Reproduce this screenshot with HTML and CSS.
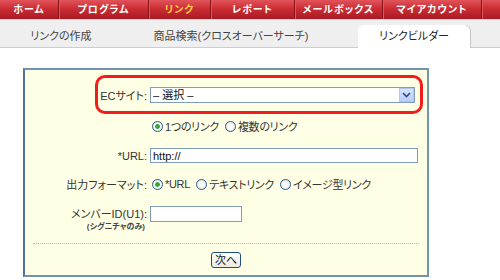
FILE: index.html
```html
<!DOCTYPE html>
<html lang="ja">
<head>
    <meta charset="UTF-8">
    <title>リンクビルダー</title>
    <link rel="stylesheet" href="styles.css">
</head>
<body>
    <nav class="topnav">
        <a class="nav-home" href="#">ホーム</a>
        <a class="nav-program" href="#">プログラム</a>
        <a class="nav-link current" href="#">リンク</a>
        <a class="nav-report" href="#">レポート</a>
        <a class="nav-mail" href="#">メールボックス</a>
        <a class="nav-account" href="#">マイアカウント</a>
    </nav>
    <div class="tabs">
        <div class="tab tab-create">リンクの作成</div>
        <div class="tab tab-search">商品検索(クロスオーバーサーチ)</div>
        <div class="tab tab-active">リンクビルダー</div>
    </div>

    <form class="builder">
        <div class="ec-row">
            <label class="ec-label" for="ecsite">ECサイト:</label>
            <div class="select-wrap">
                <select id="ecsite" class="ec-select">
                    <option>– 選択 –</option>
                </select>
                <span class="select-arrow">
                    <svg width="9" height="6" viewBox="0 0 9 6"><path d="M1 1 L4.5 4.5 L8 1" fill="none" stroke="#2b4a86" stroke-width="1.6"/></svg>
                </span>
            </div>
        </div>

        <div class="field field-count">
            <span></span>
            <div class="options">
                <label class="opt"><input type="radio" name="count" checked>1つのリンク</label>
                <label class="opt"><input type="radio" name="count">複数のリンク</label>
            </div>
        </div>

        <div class="field field-url">
            <label for="url">*URL:</label>
            <input type="text" id="url" class="text-input url-input" value="http://">
        </div>

        <div class="field field-format">
            <span class="field-label">出力フォーマット:</span>
            <div class="options">
                <label class="opt"><input type="radio" name="format" checked>*URL</label>
                <label class="opt"><input type="radio" name="format">テキストリンク</label>
                <label class="opt"><input type="radio" name="format">イメージ型リンク</label>
            </div>
        </div>

        <div class="field field-member">
            <div class="member-label">
                <label for="member">メンバーID(U1):</label>
                <small>(シグニチャのみ)</small>
            </div>
            <input type="text" id="member" class="text-input member-input">
        </div>

        <div class="divider"></div>

        <div class="actions">
            <button type="button" class="next-button">次へ</button>
        </div>
    </form>
</body>
</html>
```

FILE: styles.css
```css
* {
    box-sizing: border-box;
}

body {
    margin: 0;
    background: #fff;
    color: #333;
    font-family: "Liberation Sans", "Noto Sans CJK JP", sans-serif;
    font-size: 11px;
    font-feature-settings: "palt";
}

/* top red menu */
.topnav {
    display: flex;
    height: 19px;
    background: linear-gradient(#e1545a 0%, #cc2d35 45%, #a71b23 100%);
}

.topnav a {
    color: #fff;
    font-weight: bold;
    font-size: 10px;
    line-height: 19px;
    letter-spacing: 1px;
    text-align: center;
    text-decoration: none;
    border-right: 1px solid #8a141a;
    box-shadow: 1px 0 0 #d9585d;
}

.topnav a.current {
    color: #ffcf40;
}

.nav-home { width: 59px; }
.nav-program { width: 90px; }
.nav-link { width: 62px; }
.nav-report { width: 84px; }
.nav-mail { width: 88px; }
.nav-account { width: 99px; }

/* sub tabs */
.tabs {
    display: flex;
    align-items: flex-end;
    height: 29px;
    background: #efefef;
    border-top: 1px solid #d8d8d8;
    border-bottom: 1px solid #cdcdcd;
}

.tab {
    height: 22px;
    line-height: 22px;
    text-align: center;
    color: #444;
}

.tab-create { width: 122px; }
.tab-search { width: 218px; }

.tab-active {
    width: 112px;
    height: 23px;
    margin-left: 18px;
    margin-bottom: -1px;
    background: #fff;
    border-radius: 6px 6px 0 0;
    box-shadow: 1px 0 0 #c4c4c4;
    color: #222;
}

/* builder form */
.builder {
    width: 406px;
    margin: 20px 0 0 23px;
    padding: 5px 0 7px;
    background: #ffffe5;
    border: 2px solid #7393b2;
    border-left-color: #4f7496;
}

.ec-row {
    display: flex;
    align-items: center;
    height: 39px;
    margin: 0 4px 0 70px;
    padding-right: 5px;
    border: 3px solid #f21c1c;
    border-radius: 10px;
}

.ec-label {
    width: 49px;
    margin-right: 3px;
    text-align: right;
}

.select-wrap {
    position: relative;
    flex: 1;
    height: 16px;
}

.ec-select {
    width: 100%;
    height: 16px;
    padding: 0 2px;
    border: 1px solid #7f9db9;
    background: #fff;
    color: #111;
    font: inherit;
    font-size: 11px;
    appearance: none;
    -webkit-appearance: none;
}

.select-arrow {
    position: absolute;
    top: 1px;
    right: 1px;
    width: 15px;
    height: 14px;
    display: flex;
    justify-content: center;
    align-items: center;
    background: linear-gradient(#d8e4fd, #b9cdf8);
    border: 1px solid #b3c6ef;
    pointer-events: none;
}

.field {
    display: grid;
    grid-template-columns: 122px 1fr;
    column-gap: 3px;
    align-items: center;
    padding-right: 9px;
}

.field > label,
.field-label {
    text-align: right;
}

.field-count {
    margin-top: 4px;
    height: 16px;
}

.field-url {
    margin-top: 14px;
}

.field-format {
    margin-top: 13px;
    height: 16px;
}

.field-member {
    margin-top: 14px;
    align-items: start;
}

.options {
    display: flex;
    align-items: center;
    letter-spacing: -0.3px;
}

.opt {
    display: flex;
    align-items: center;
    margin-right: 4px;
}

.opt input {
    appearance: none;
    -webkit-appearance: none;
    width: 11px;
    height: 11px;
    margin: 0 2px 0 2px;
    border: 1px solid #2a5a8c;
    border-radius: 50%;
    background: radial-gradient(circle, #fff 30%, #dcdcd4 100%);
}

.opt input:checked {
    background: radial-gradient(circle, #3cb43c 0, #2a9f2a 2px, #fff 2.6px, #fff 40%, #dcdcd4 100%);
}

.text-input {
    height: 16px;
    padding: 0 2px;
    border: 1px solid #7f9db9;
    background: #fff;
    color: #111;
    font: inherit;
    font-size: 11px;
}

.url-input {
    width: 100%;
    height: 15px;
}

.member-input {
    width: 92px;
}

.member-label {
    display: flex;
    flex-direction: column;
    align-items: flex-end;
    line-height: 16px;
}

.member-label small {
    margin-right: 2px;
    font-size: 8px;
    line-height: 9px;
    font-weight: bold;
    color: #444;
}

.divider {
    margin: 12px 8px 0;
    border-top: 1px dotted #b8b8b0;
}

.actions {
    display: flex;
    justify-content: center;
    margin-top: 8px;
}

.next-button {
    height: 16px;
    padding: 0 3px;
    border: 1px solid #1e4f7d;
    border-radius: 3px;
    background: linear-gradient(#fff, #ece9df);
    color: #111;
    font: inherit;
    font-size: 11px;
    line-height: 13px;
}
```
